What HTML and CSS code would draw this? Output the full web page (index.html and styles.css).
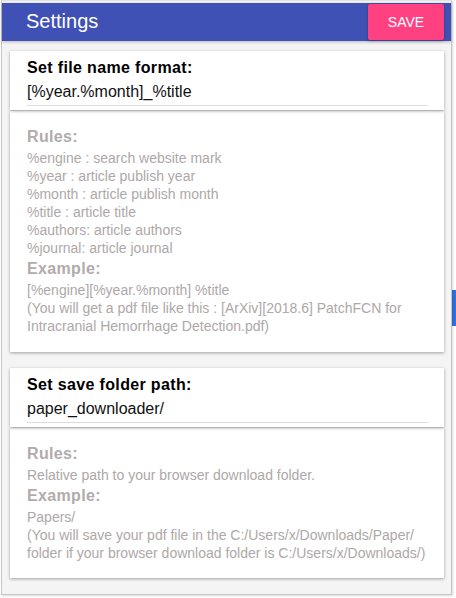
FILE: index.html
```html
<!DOCTYPE html>
<html>
<head>
<meta charset="utf-8">
<link rel="stylesheet" href="styles.css">
</head>
<body>
<div class="page-bar"></div>
<div class="dialog">
  <div class="header">
    <div class="title">Settings</div>
    <button class="save">SAVE</button>
  </div>
  <div class="content">
    <div class="card field-card">
      <div class="field-label">Set file name format:</div>
      <div class="field-input">[%year.%month]_%title</div>
    </div>
    <div class="card rules-card">
      <div class="rules-head">Rules:</div>
      <div class="rules-line">%engine : search website mark</div>
      <div class="rules-line">%year : article publish year</div>
      <div class="rules-line">%month : article publish month</div>
      <div class="rules-line">%title : article title</div>
      <div class="rules-line">%authors: article authors</div>
      <div class="rules-line">%journal: article journal</div>
      <div class="rules-head">Example:</div>
      <div class="rules-line">[%engine][%year.%month] %title</div>
      <div class="rules-line">(You will get a pdf file like this : [ArXiv][2018.6] PatchFCN for Intracranial Hemorrhage Detection.pdf)</div>
    </div>
    <div class="card field-card second">
      <div class="field-label">Set save folder path:</div>
      <div class="field-input">paper_downloader/</div>
    </div>
    <div class="card rules-card last">
      <div class="rules-head">Rules:</div>
      <div class="rules-line">Relative path to your browser download folder.</div>
      <div class="rules-head">Example:</div>
      <div class="rules-line">Papers/</div>
      <div class="rules-line">(You will save your pdf file in the C:/Users/x/Downloads/Paper/ folder if your browser download folder is C:/Users/x/Downloads/)</div>
    </div>
  </div>
</div>
</body>
</html>
```
FILE: styles.css
```css
html, body {
  margin: 0;
  padding: 0;
  background: #ffffff;
  font-family: "Liberation Sans", Arial, sans-serif;
}

body {
  position: relative;
  width: 456px;
  height: 598px;
  overflow: hidden;
}

.page-bar {
  position: absolute;
  left: 450px;
  top: 290px;
  width: 6px;
  height: 36px;
  background: #2f6fe0;
}

.dialog {
  position: relative;
  margin-left: 1px;
  width: 449px;
  height: 591px;
  border: 1px solid #c6c6c6;
  border-top-color: #e2e2e2;
  padding-top: 2px;
  background: #f4f4f4;
  box-shadow: 1px 1px 2px rgba(0, 0, 0, 0.15);
}

.header {
  height: 38px;
  background: #3f51b5;
  display: flex;
  align-items: center;
  justify-content: space-between;
  padding-left: 24px;
  box-shadow: 0 1px 3px rgba(0, 0, 0, 0.25);
}

.title {
  color: #ffffff;
  font-size: 20px;
  line-height: 24px;
  margin-top: -2px;
}

.save {
  width: 76px;
  height: 36px;
  margin-right: 7px;
  border: 0;
  border-radius: 2px;
  background: #ff4081;
  color: #ffffff;
  font-family: "Liberation Sans", Arial, sans-serif;
  font-size: 14px;
  box-shadow: 0 1px 3px rgba(0, 0, 0, 0.3);
  padding: 0;
}

.content {
  padding: 10px 7px 0 8px;
}

.card {
  background: #ffffff;
  box-shadow: 0 1px 3px rgba(0, 0, 0, 0.35);
}

.field-card {
  position: relative;
  z-index: 1;
  padding: 5px 16px 4px 17px;
}

.field-card.second {
  margin-top: 16px;
}

.field-label {
  font-size: 16px;
  font-weight: bold;
  line-height: 23px;
  letter-spacing: 0.35px;
  color: #000000;
}

.field-input {
  font-size: 16px;
  line-height: 26px;
  color: #111111;
  border-bottom: 1px solid #dcdcdc;
}

.rules-card {
  margin-top: 1px;
  padding: 14px 16px 17px 17px;
  color: #aea8a8;
}

.rules-card.last {
  padding-top: 14px;
  padding-bottom: 16px;
}

.rules-head {
  font-size: 16px;
  font-weight: bold;
  line-height: 24px;
  letter-spacing: 0.35px;
  color: #b2abab;
}

.rules-line {
  font-size: 14px;
  line-height: 18px;
}
```
